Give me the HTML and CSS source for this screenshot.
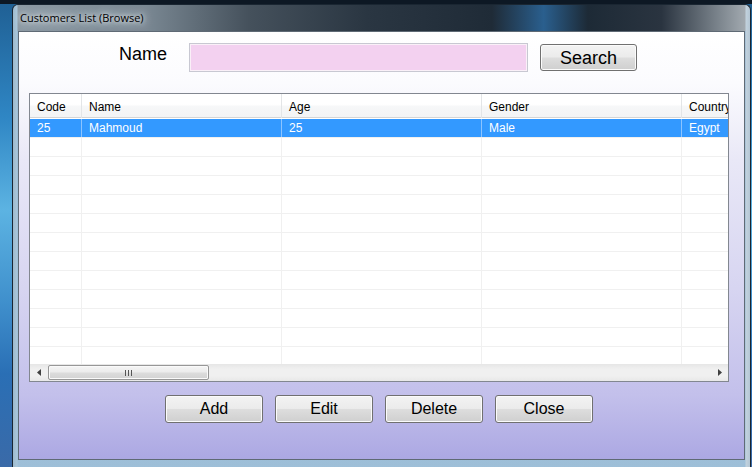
FILE: index.html
```html
<!DOCTYPE html>
<html>
<head>
<meta charset="utf-8">
<title>Customers List (Browse)</title>
<link rel="stylesheet" href="styles.css">
</head>
<body>
<div class="desktop">
  <div class="window">
    <div class="titlebar">
      <span class="title">Customers List (Browse)</span>
    </div>
    <div class="client">
      <div class="search-row">
        <span class="name-label">Name</span>
        <div class="name-input"></div>
        <button class="btn btn-search">Search</button>
      </div>
      <div class="listview">
        <div class="lv-header">
          <div class="hcell">Code</div>
          <div class="hcell">Name</div>
          <div class="hcell">Age</div>
          <div class="hcell">Gender</div>
          <div class="hcell">Country</div>
        </div>
        <div class="lv-body">
          <div class="row selected"><div class="cell">25</div><div class="cell">Mahmoud</div><div class="cell">25</div><div class="cell">Male</div><div class="cell">Egypt</div></div>
          <div class="row"><div class="cell"></div><div class="cell"></div><div class="cell"></div><div class="cell"></div><div class="cell"></div></div>
          <div class="row"><div class="cell"></div><div class="cell"></div><div class="cell"></div><div class="cell"></div><div class="cell"></div></div>
          <div class="row"><div class="cell"></div><div class="cell"></div><div class="cell"></div><div class="cell"></div><div class="cell"></div></div>
          <div class="row"><div class="cell"></div><div class="cell"></div><div class="cell"></div><div class="cell"></div><div class="cell"></div></div>
          <div class="row"><div class="cell"></div><div class="cell"></div><div class="cell"></div><div class="cell"></div><div class="cell"></div></div>
          <div class="row"><div class="cell"></div><div class="cell"></div><div class="cell"></div><div class="cell"></div><div class="cell"></div></div>
          <div class="row"><div class="cell"></div><div class="cell"></div><div class="cell"></div><div class="cell"></div><div class="cell"></div></div>
          <div class="row"><div class="cell"></div><div class="cell"></div><div class="cell"></div><div class="cell"></div><div class="cell"></div></div>
          <div class="row"><div class="cell"></div><div class="cell"></div><div class="cell"></div><div class="cell"></div><div class="cell"></div></div>
          <div class="row"><div class="cell"></div><div class="cell"></div><div class="cell"></div><div class="cell"></div><div class="cell"></div></div>
          <div class="row"><div class="cell"></div><div class="cell"></div><div class="cell"></div><div class="cell"></div><div class="cell"></div></div>
          <div class="row"><div class="cell"></div><div class="cell"></div><div class="cell"></div><div class="cell"></div><div class="cell"></div></div>
        </div>
        <div class="hscroll">
          <div class="sb-arrow"><svg width="4" height="7" viewBox="0 0 4 7"><path d="M4 0 L0 3.5 L4 7 Z" fill="#404040"/></svg></div>
          <div class="sb-track">
            <div class="sb-thumb"><span class="grip"></span><span class="grip"></span><span class="grip"></span></div>
          </div>
          <div class="sb-arrow"><svg width="4" height="7" viewBox="0 0 4 7"><path d="M0 0 L4 3.5 L0 7 Z" fill="#404040"/></svg></div>
        </div>
      </div>
      <div class="actions">
        <button class="btn">Add</button>
        <button class="btn">Edit</button>
        <button class="btn">Delete</button>
        <button class="btn">Close</button>
      </div>
    </div>
  </div>
</div>
</body>
</html>
```

FILE: styles.css
```css
* { box-sizing: border-box; }

html, body {
  margin: 0;
  padding: 0;
  width: 752px;
  height: 467px;
  overflow: hidden;
}

.desktop {
  width: 752px;
  height: 467px;
  padding: 4px 0 0 12px;
  background:
    linear-gradient(180deg, #0d1824 0px, #0d1824 4px, transparent 4px),
    linear-gradient(180deg, #1f5f93 0%, #2f86c4 25%, #5cb3e2 45%, #3f8fcc 65%, #2a6fb5 80%, #3a6aa8 100%);
  overflow: hidden;
}

.window {
  width: 739px;
  height: 470px;
  padding: 0 5px 0 5px;
  border: 1px solid #1a2632;
  border-bottom: none;
  border-radius: 6px 6px 0 0;
  background:
    linear-gradient(90deg, #9db9cc 0px, #a9c6da 4px, transparent 5px),
    linear-gradient(270deg, #b4c6d4 0px, #c2d2de 4px, transparent 5px),
    linear-gradient(180deg, transparent 26px, #8fb2cf 26px, #9ebfd8 100%),
    linear-gradient(90deg, #8d9aa4 0%, #7a8893 18%, #45515c 32%, #2a3642 48%, #1f2b37 65%, #2a5f8e 72%, #1d2a36 78%, #2a3440 88%, #7e878f 96%, #a9b0b6 100%);
}

.titlebar {
  height: 26px;
  display: flex;
  align-items: center;
  padding-left: 2px;
}

.title {
  font-family: "Open Sans", "Noto Sans", sans-serif;
  font-size: 11px;
  color: #000;
  line-height: 18px;
  text-shadow: 0 0 4px #e8eef2, 0 0 8px #d8e0e6, 0 0 12px #d0d8de;
}

.client {
  width: 727px;
  height: 429px;
  border: 1px solid #5f6a75;
  background: linear-gradient(180deg, #ffffff 0%, #fbfbfe 12%, #e9e8f7 30%, #d7d5f1 60%, #c3c0eb 85%, #aca8e3 100%);
  padding-top: 11px;
}

.search-row {
  display: flex;
  align-items: flex-start;
  padding-left: 100px;
  height: 29px;
}

.name-label {
  font-family: "Liberation Sans", Arial, sans-serif;
  font-size: 18px;
  line-height: 20px;
  color: #000;
  width: 70px;
  padding-top: 1px;
}

.name-input {
  width: 339px;
  height: 29px;
  background: #f3d1f0;
  border: 1px solid #c8c8d2;
  box-shadow: inset 0 0 0 1px #faf0f8;
}

.btn {
  font-family: "Liberation Sans", Arial, sans-serif;
  font-size: 16px;
  color: #000;
  width: 98px;
  height: 28px;
  padding: 0;
  border: 1px solid #707070;
  border-radius: 3px;
  background: linear-gradient(180deg, #f3f3f3 0%, #ebebeb 48%, #dddddd 52%, #cfcfcf 100%);
  box-shadow: inset 0 0 0 1px #fbfbfb;
  line-height: 24px;
}

.btn-search {
  font-size: 18px;
  width: 97px;
  height: 27px;
  margin-left: 12px;
  margin-top: 1px;
}

.listview {
  margin: 21px 0 0 10px;
  width: 700px;
  height: 289px;
  border: 1px solid #828790;
  background: #fff;
  overflow: hidden;
  display: flex;
  flex-direction: column;
}

.lv-header {
  display: grid;
  grid-template-columns: 52px 200px 200px 200px 200px;
  height: 24px;
  flex: none;
  background: linear-gradient(180deg, #ffffff 0%, #ffffff 45%, #f6f7f8 55%, #f3f4f5 100%);
  border-bottom: 1px solid #d5d5d5;
  width: 852px;
}

.hcell {
  font-family: "Liberation Sans", Arial, sans-serif;
  font-size: 12px;
  line-height: 22px;
  padding-top: 2px;
  color: #000;
  padding-left: 7px;
  border-right: 1px solid #e3e5e7;
  white-space: nowrap;
}

.lv-body {
  flex: 1;
  padding-top: 1px;
  overflow: hidden;
  width: 852px;
}

.row {
  display: grid;
  grid-template-columns: 52px 200px 200px 200px 200px;
  height: 19px;
  border-bottom: 1px solid #f0f0f0;
}

.cell {
  font-family: "Liberation Sans", Arial, sans-serif;
  font-size: 12px;
  line-height: 17px;
  padding-top: 1px;
  padding-left: 7px;
  border-right: 1px solid #f0f0f0;
  white-space: nowrap;
}

.row.selected .cell {
  background: #3399ff;
  color: #fff;
  border-right-color: #8cc4ff;
}

.hscroll {
  flex: none;
  height: 17px;
  display: flex;
  background: linear-gradient(180deg, #e6e6e6 0%, #f0f0f0 30%, #f0f0f0 70%, #e8e8e8 100%);
}

.sb-arrow {
  width: 17px;
  height: 17px;
  display: flex;
  align-items: center;
  justify-content: center;
  flex: none;
}

.sb-track {
  flex: 1;
  display: flex;
  align-items: center;
  padding-left: 1px;
}

.sb-thumb {
  width: 161px;
  height: 15px;
  border: 1px solid #979797;
  border-radius: 2px;
  background: linear-gradient(180deg, #f5f5f5 0%, #ececec 45%, #dcdcdc 55%, #d2d2d2 100%);
  box-shadow: inset 0 0 0 1px #fafafa;
  display: flex;
  align-items: center;
  justify-content: center;
  gap: 2px;
}

.grip {
  width: 1px;
  height: 6px;
  background: #555;
}

.actions {
  display: flex;
  justify-content: center;
  gap: 12px;
  margin-top: 13px;
  padding-right: 5px;
}
```
